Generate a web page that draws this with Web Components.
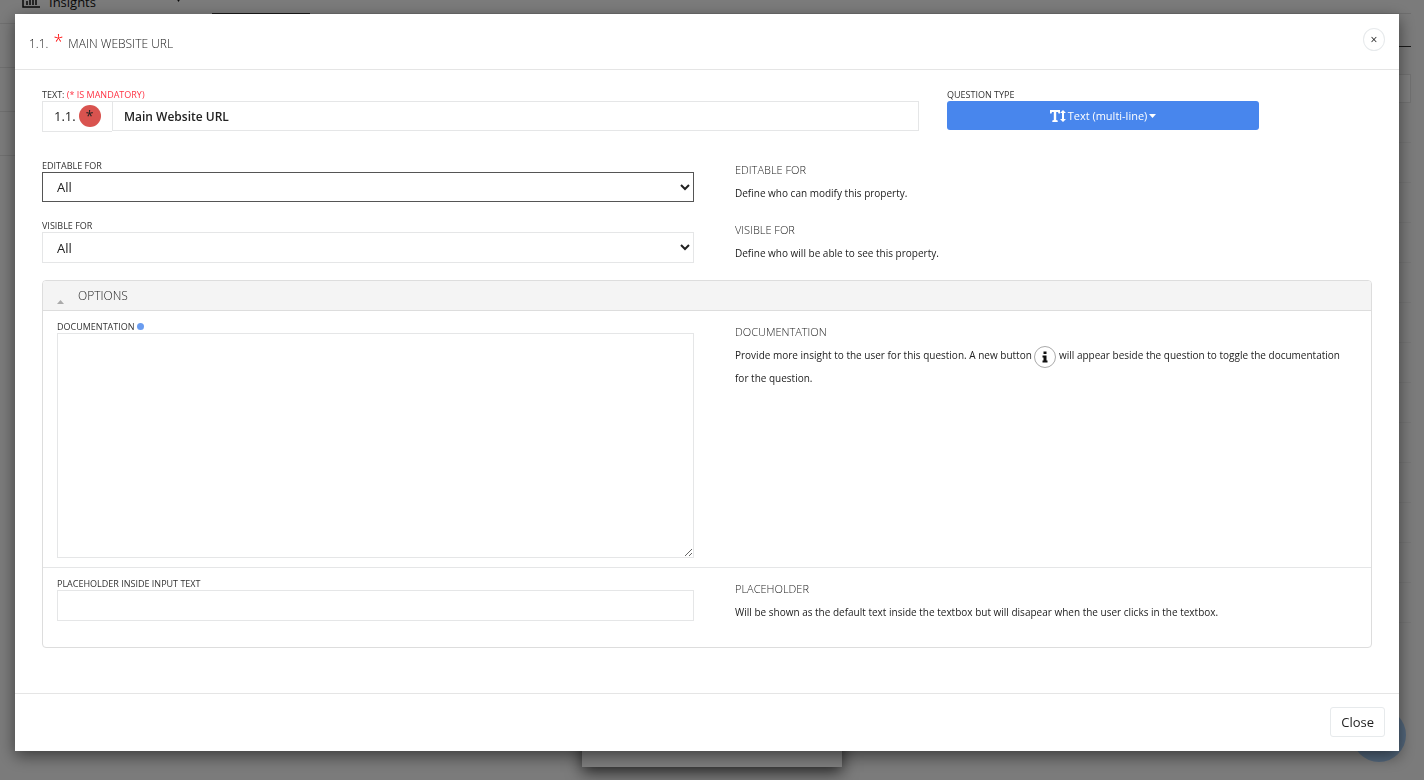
<!DOCTYPE html>
<html lang="en">
<head>
<meta charset="utf-8">
<title>Main Website URL</title>
<style>
    html, body {
        margin: 0;
        height: 100%;
        overflow: hidden;
    }

    body {
        font-family: "Open Sans", "Noto Sans", sans-serif;
        font-size: 13px;
        color: #222;
        background: #f6f6f6;
    }
</style>
</head>
<body>

<question-page></question-page>

<modal-dialog>
    <question-title slot="title" number="1.1.">Main Website URL</question-title>

    <question-form></question-form>
</modal-dialog>

<script>
/**
 * Attaches an open shadow root holding the given markup.
 */
function render(el, html) {
    const template = document.createElement('template');
    template.innerHTML = html;
    el.attachShadow({mode: 'open'}).appendChild(template.content.cloneNode(true));
}

/**
 * The page that lies behind the dialog.
 */
class QuestionPage extends HTMLElement {
    constructor() {
        super();
        render(this, `
            <style>
                :host {
                    display: grid;
                    grid-template-columns: 212px 1fr;
                    height: 100%;
                    position: relative;
                    overflow: hidden;
                }

                nav {
                    margin-top: -20px;
                }

                nav a {
                    display: flex;
                    align-items: center;
                    gap: 9px;
                    height: 43px;
                    padding: 0 31px 0 22px;
                    border-bottom: 1px solid #e0e0e0;
                    color: #111;
                    text-decoration: none;
                }

                nav .caret {
                    margin: 0 0 4px auto;
                }

                main {
                    padding-right: 13px;
                }

                .tabs {
                    height: 13px;
                    border-bottom: 1px solid #ddd;
                }

                .tabs i {
                    display: block;
                    width: 98px;
                    height: 13px;
                    border-bottom: 1px solid #333;
                }

                .bar {
                    height: 32px;
                    border-bottom: 1px solid #333;
                }

                .search {
                    height: 27px;
                    margin-top: 27px;
                    border: 1px solid #e4e4e4;
                    background: #fff;
                }

                .row {
                    height: 39px;
                    border-bottom: 1px solid #ebebeb;
                }

                .card {
                    position: absolute;
                    bottom: 13px;
                    left: 50%;
                    width: 260px;
                    height: 80px;
                    margin-left: -130px;
                    background: #fff;
                    box-shadow: 0 5px 15px rgba(0, 0, 0, .7);
                }

                .bubble {
                    position: absolute;
                    right: 18px;
                    bottom: 18px;
                    width: 54px;
                    height: 54px;
                    border-radius: 50%;
                    background: #a6cef8;
                }
            </style>
            <nav>
                <a href="#insights">
                    <svg width="18" height="16" viewBox="0 0 18 16" fill="none" stroke="#111" stroke-width="1.5">
                        <path d="M1 0v13h17M5 11V7M8 11V4M11 11V6M14 11V2"/>
                    </svg>
                    Insights
                    <svg class="caret" width="5" height="4" viewBox="0 0 5 4"><path d="M0 0h5L2.500 4z" fill="#111"/></svg>
                </a>
                <a href="#"></a>
                <a href="#"></a>
                <a href="#"></a>
            </nav>
            <main>
                <div class="tabs"><i></i></div>
                <div class="bar"></div>
                <div class="search"></div>
            </main>
            <div class="card"></div>
            <div class="bubble"></div>
        `);

        const main = this.shadowRoot.querySelector('main');
        for(let i = 0; i < 13; i++) {
            const row = document.createElement('div');
            row.className = 'row';
            main.appendChild(row);
        }
    }
}

/**
 * Backdrop and dialog box. Takes a "title" slot and the body as default slot.
 */
class ModalDialog extends HTMLElement {
    constructor() {
        super();
        render(this, `
            <style>
                :host {
                    position: fixed;
                    inset: 0;
                    display: block;
                    box-sizing: border-box;
                    padding: 14px 25px 29px 15px;
                    background: rgba(0, 0, 0, .5);
                    overflow: hidden;
                }

                section {
                    background: #fff;
                    box-shadow: 0 5px 15px rgba(0, 0, 0, .5);
                }

                header {
                    display: flex;
                    align-items: flex-start;
                    justify-content: space-between;
                    padding: 14px 14px 10px;
                    border-bottom: 1px solid #e5e5e5;
                }

                footer {
                    display: flex;
                    justify-content: flex-end;
                    padding: 13px 14px 14px;
                    border-top: 1px solid #e5e5e5;
                }

                button {
                    font: inherit;
                    color: inherit;
                    background: #fff;
                    border: 1px solid #e7eaec;
                    border-radius: 3px;
                }

                header button {
                    width: 22px;
                    height: 23px;
                    padding: 0;
                    border-radius: 50%;
                    font-size: 12px;
                    line-height: 21px;
                }

                footer button {
                    height: 30px;
                    padding: 0 10px;
                }
            </style>
            <section role="dialog" aria-modal="true">
                <header>
                    <slot name="title"></slot>
                    <button type="button" aria-label="Close dialog">×</button>
                </header>
                <slot></slot>
                <footer><button type="button">Close</button></footer>
            </section>
        `);
    }
}

/**
 * Number, mandatory mark and name of the question.
 */
class QuestionTitle extends HTMLElement {
    constructor() {
        super();
        render(this, `
            <style>
                :host {
                    display: block;
                }

                h1 {
                    display: flex;
                    gap: 5px;
                    margin: 0;
                    font-size: 12px;
                    font-weight: 300;
                    line-height: 31px;
                    text-transform: uppercase;
                }

                sup {
                    font-size: 18px;
                    line-height: 27px;
                    color: #f00;
                }
            </style>
            <h1><span></span><sup>*</sup><slot></slot></h1>
        `);
    }

    connectedCallback() {
        this.shadowRoot.querySelector('span').textContent = this.getAttribute('number');
    }
}

/**
 * Two columns: the fields on the left, the "help" slot on the right.
 */
class FormRow extends HTMLElement {
    constructor() {
        super();
        render(this, `
            <style>
                :host {
                    display: grid;
                    grid-template-columns: calc(50% - 13px) 1fr;
                    column-gap: 41px;
                }
            </style>
            <slot></slot>
            <slot name="help"></slot>
        `);
    }
}

/**
 * Heading and explanation of one property.
 */
class HelpText extends HTMLElement {
    constructor() {
        super();
        render(this, `
            <style>
                :host {
                    display: block;
                    font-size: 10px;
                    line-height: 21px;
                }

                h2 {
                    margin: 0 0 2px;
                    font-size: 11px;
                    font-weight: 300;
                    line-height: 22px;
                    text-transform: uppercase;
                }

                p {
                    margin: 0;
                }
            </style>
            <h2></h2>
            <p><slot></slot></p>
        `);
    }

    connectedCallback() {
        this.shadowRoot.querySelector('h2').textContent = this.getAttribute('heading');
    }
}

class InfoIcon extends HTMLElement {
    constructor() {
        super();
        render(this, `
            <style>
                :host {
                    display: inline-block;
                    margin-top: 1px;
                    vertical-align: middle;
                }

                svg {
                    display: block;
                }
            </style>
            <svg width="22" height="22" viewBox="0 0 22 22">
                <circle cx="11" cy="11" r="10.5" fill="#fff" stroke="#aaa"/>
                <path fill="#111" d="M9.500 5.500h3v2.500h-3zM8.500 9.500h4v5h1v2h-5v-2h1v-3h-1z"/>
            </svg>
        `);
    }
}

class OptionsPanel extends HTMLElement {
    constructor() {
        super();
        render(this, `
            <style>
                :host {
                    display: block;
                    border: 1px solid #ddd;
                    border-radius: 4px;
                }

                h2 {
                    display: flex;
                    align-items: center;
                    gap: 14px;
                    height: 29px;
                    margin: 0;
                    padding: 0 14px;
                    font-size: 12px;
                    font-weight: 300;
                    text-transform: uppercase;
                    background: #f4f4f4;
                    border-bottom: 1px solid #ddd;
                    border-radius: 3px 3px 0 0;
                }

                svg {
                    margin-top: 12px;
                }
            </style>
            <h2>
                <svg width="7" height="4" viewBox="0 0 7 4"><path d="M0 4l3.500-4L7 4z" fill="#aaa"/></svg>
                <slot name="heading"></slot>
            </h2>
            <slot></slot>
        `);
    }
}

/**
 * The form with all properties of the question.
 */
class QuestionForm extends HTMLElement {
    constructor() {
        super();
        render(this, `
            <style>
                :host {
                    display: block;
                    padding: 18px 27px 45px;
                }

                label {
                    display: block;
                    font-size: 9px;
                    line-height: 13px;
                    text-transform: uppercase;
                    color: #333;
                }

                label em {
                    font-style: normal;
                    color: #f34;
                }

                label i {
                    display: inline-block;
                    width: 7px;
                    height: 7px;
                    border-radius: 50%;
                    background: #6a9cf0;
                }

                input, select, textarea {
                    display: block;
                    box-sizing: border-box;
                    width: 100%;
                    height: 31px;
                    margin: 0;
                    padding: 0 11px;
                    font: inherit;
                    color: inherit;
                    background: #fff;
                    border: 1px solid #e5e6e7;
                    border-radius: 0;
                    outline: none;
                }

                select {
                    padding: 0 10px;
                }

                select.active {
                    height: 30px;
                    border-color: #555;
                }

                textarea {
                    height: 225px;
                    resize: both;
                }

                .top {
                    display: grid;
                    grid-template-columns: 877fr 312fr 85fr;
                    column-gap: 28px;
                    margin-bottom: 27px;
                }

                .group {
                    display: flex;
                }

                .group span {
                    display: flex;
                    flex: none;
                    align-items: center;
                    gap: 3px;
                    box-sizing: border-box;
                    width: 70px;
                    height: 31px;
                    padding: 0 0 2px 11px;
                    border: 1px solid #e5e6e7;
                    border-right: 0;
                }

                .group b {
                    width: 22px;
                    height: 22px;
                    border-radius: 50%;
                    font-size: 14px;
                    font-weight: 400;
                    line-height: 22px;
                    text-align: center;
                    background: #d9534f;
                }

                .group input {
                    height: 30px;
                    font-size: 12px;
                    font-weight: 600;
                }

                .type {
                    display: flex;
                    align-items: center;
                    justify-content: center;
                    gap: 2px;
                    width: 100%;
                    height: 29px;
                    padding: 0;
                    font: inherit;
                    font-size: 11px;
                    color: #fff;
                    background: #4886ed;
                    border: 0;
                    border-radius: 3px;
                }

                form-row {
                    margin-bottom: 15px;
                }

                options-panel {
                    margin-top: 16px;
                }

                options-panel form-row {
                    margin: 0;
                    padding: 9px 14px;
                }

                options-panel help-text {
                    padding-top: 1px;
                }

                options-panel form-row + form-row {
                    padding-bottom: 24px;
                    border-top: 1px solid #e5e6e7;
                }
            </style>

            <div class="top">
                <div>
                    <label for="text">Text: <em>(* is mandatory)</em></label>
                    <div class="group">
                        <span>1.1. <b>*</b></span>
                        <input id="text" type="text" value="Main Website URL">
                    </div>
                </div>
                <div>
                    <label for="type">Question type</label>
                    <button id="type" class="type" type="button">
                        <svg width="16" height="12" viewBox="0 0 16 12" fill="#fff">
                            <path d="M0 0h10v3.500H8.500L8 2H6.200v8l1.500.5V12H2.300v-1.500l1.500-.5V2H2l-.5 1.500H0z"/>
                            <path d="M13 0l3 3h-2v6h2l-3 3-3-3h2V3h-2z"/>
                        </svg>
                        Text (multi-line)
                        <svg width="7" height="4" viewBox="0 0 7 4" fill="#fff"><path d="M0 0h7L3.500 4z"/></svg>
                    </button>
                </div>
            </div>

            <form-row>
                <div>
                    <label for="editable">Editable for</label>
                    <select id="editable" class="active"><option>All</option></select>
                </div>
                <help-text slot="help" heading="Editable for">Define who can modify this property.</help-text>
            </form-row>

            <form-row>
                <div>
                    <label for="visible">Visible for</label>
                    <select id="visible"><option>All</option></select>
                </div>
                <help-text slot="help" heading="Visible for">Define who will be able to see this property.</help-text>
            </form-row>

            <options-panel>
                <span slot="heading">Options</span>
                <form-row>
                    <div>
                        <label for="documentation">Documentation <i></i></label>
                        <textarea id="documentation"></textarea>
                    </div>
                    <help-text slot="help" heading="Documentation">Provide more insight to the user for this question. A new button <info-icon></info-icon> will appear beside the question to toggle the documentation for&nbsp;the question.</help-text>
                </form-row>
                <form-row>
                    <div>
                        <label for="placeholder">Placeholder inside input text</label>
                        <input id="placeholder" type="text">
                    </div>
                    <help-text slot="help" heading="Placeholder">Will be shown as the default text inside the textbox but will disapear when the user clicks in the textbox.</help-text>
                </form-row>
            </options-panel>
        `);
    }
}

customElements.define('question-page', QuestionPage);
customElements.define('modal-dialog', ModalDialog);
customElements.define('question-title', QuestionTitle);
customElements.define('form-row', FormRow);
customElements.define('help-text', HelpText);
customElements.define('info-icon', InfoIcon);
customElements.define('options-panel', OptionsPanel);
customElements.define('question-form', QuestionForm);
</script>
</body>
</html>
